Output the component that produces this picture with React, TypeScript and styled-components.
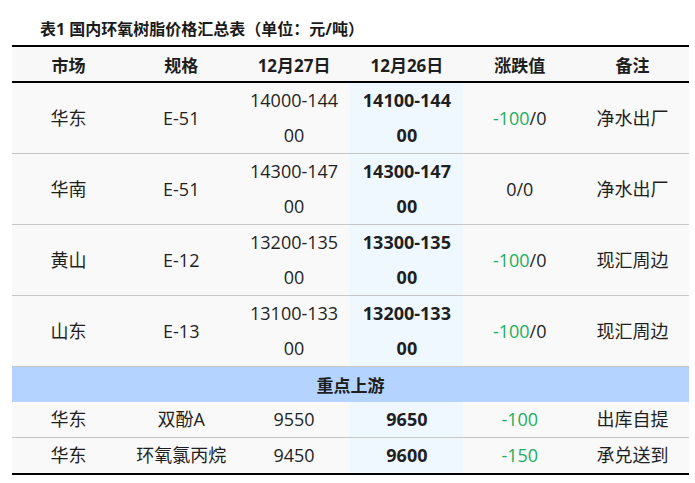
import React from "react";
import styled, { createGlobalStyle } from "styled-components";

const GlobalStyle = createGlobalStyle`
  body {
    margin: 0;
    background: #ffffff;
    font-family: "Open Sans", "Noto Sans CJK SC", sans-serif;
    color: #222222;
  }
`;

const Page = styled.div`
  padding: 17px 6px 0 12px;
`;

const Title = styled.div`
  height: 24px;
  line-height: 24px;
  margin-bottom: 4px;
  padding-left: 28px;
  font-size: 16px;
  font-weight: 700;
  color: #1a1a1a;
`;

const Table = styled.table`
  width: 677px;
  border-collapse: collapse;
  table-layout: fixed;
  border-top: 2px solid #000;
  border-bottom: 2px solid #000;
`;

const HeadCell = styled.th`
  height: 34px;
  padding: 0 8px;
  background: #f8f8f8;
  border-bottom: 2px solid #000;
  font-size: 17px;
  font-weight: 700;
  color: #1e1e1e;
  text-align: center;
`;

const Row = styled.tr`
  border-bottom: 1px solid #c6c6c6;
  &:last-child {
    border-bottom: none;
  }
`;

const Cell = styled.td<{ $hl?: boolean }>`
  padding: 0 8px;
  line-height: 35px;
  font-size: 18px;
  text-align: center;
  word-break: break-all;
  background: ${(p) => (p.$hl ? "#f0f8ff" : "#f9f9f9")};
  font-weight: ${(p) => (p.$hl ? 700 : 400)};
  color: #1f1f1f;
`;

const SectionCell = styled.td`
  height: 35px;
  padding: 0;
  background: #b4d3fe;
  font-size: 17px;
  font-weight: 700;
  text-align: center;
  color: #1e1e1e;
`;

const Down = styled.span`
  color: #1cae5f;
`;

type Item = {
  market: string;
  spec: string;
  prev: string;
  cur: string;
  diff: string;
  tail?: string;
  note: string;
};

const resin: Item[] = [
  { market: "华东", spec: "E-51", prev: "14000-14400", cur: "14100-14400", diff: "-100", tail: "/0", note: "净水出厂" },
  { market: "华南", spec: "E-51", prev: "14300-14700", cur: "14300-14700", diff: "", tail: "0/0", note: "净水出厂" },
  { market: "黄山", spec: "E-12", prev: "13200-13500", cur: "13300-13500", diff: "-100", tail: "/0", note: "现汇周边" },
  { market: "山东", spec: "E-13", prev: "13100-13300", cur: "13200-13300", diff: "-100", tail: "/0", note: "现汇周边" },
];

const upstream: Item[] = [
  { market: "华东", spec: "双酚A", prev: "9550", cur: "9650", diff: "-100", note: "出库自提" },
  { market: "华东", spec: "环氧氯丙烷", prev: "9450", cur: "9600", diff: "-150", note: "承兑送到" },
];

const heads = ["市场", "规格", "12月27日", "12月26日", "涨跌值", "备注"];

function ItemRow({ item }: { item: Item }) {
  return (
    <Row>
      <Cell>{item.market}</Cell>
      <Cell>{item.spec}</Cell>
      <Cell>{item.prev}</Cell>
      <Cell $hl>{item.cur}</Cell>
      <Cell>
        {item.diff && <Down>{item.diff}</Down>}
        {item.tail}
      </Cell>
      <Cell>{item.note}</Cell>
    </Row>
  );
}

export default function App() {
  return (
    <>
      <GlobalStyle />
      <Page>
        <Title>表1 国内环氧树脂价格汇总表（单位：元/吨）</Title>
        <Table>
          <thead>
            <tr>
              {heads.map((h) => (
                <HeadCell key={h}>{h}</HeadCell>
              ))}
            </tr>
          </thead>
          <tbody>
            {resin.map((it) => (
              <ItemRow key={it.market + it.spec} item={it} />
            ))}
            <tr>
              <SectionCell colSpan={6}>重点上游</SectionCell>
            </tr>
            {upstream.map((it) => (
              <ItemRow key={it.spec} item={it} />
            ))}
          </tbody>
        </Table>
      </Page>
    </>
  );
}
